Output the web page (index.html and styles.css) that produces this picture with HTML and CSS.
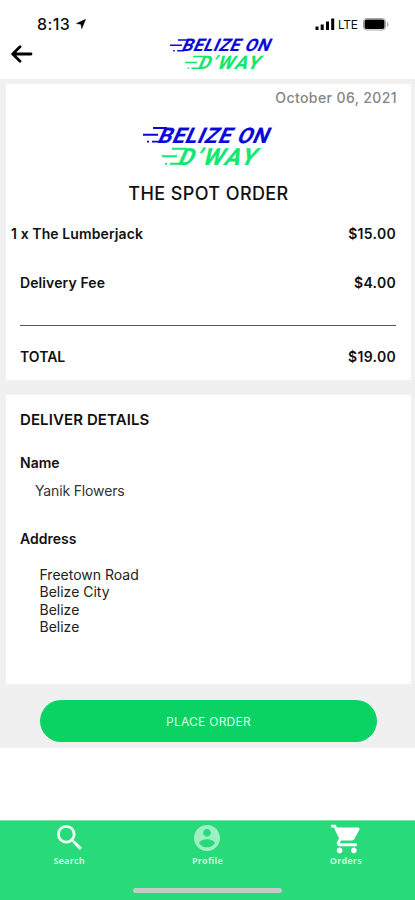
FILE: index.html
```html
<!DOCTYPE html>
<html lang="en">
<head>
<meta charset="utf-8">
<title>Belize on D'Way</title>
<link rel="stylesheet" href="styles.css">
</head>
<body>
<svg width="0" height="0" class="defs">
  <symbol id="logo" viewBox="0 0 132 42">
    <g fill="#0907dc" stroke="#0907dc">
      <path d="M10 2h14M0 8.800h15M4 15.600h2M9 15.600h9" stroke-width="1.900"/>
      <text transform="translate(13.500 16.500) skewX(-24)" font-size="21.500" stroke-width=".2" textLength="110" lengthAdjust="spacing">BELIZE ON</text>
    </g>
    <g fill="#10e96d" stroke="#10e96d">
      <path d="M29 22.800h14M19 30.300h15M22 37.800h2M27 37.800h11" stroke-width="1.900"/>
      <text transform="translate(33.500 39.200) skewX(-24)" font-size="23.500" stroke-width=".2" textLength="77" lengthAdjust="spacing">D’WAY</text>
    </g>
  </symbol>
</svg>
<div class="app">
  <header class="header">
    <div class="status">
      <span class="time">8:13</span>
      <svg class="loc" viewBox="0 0 11 11"><path d="M10.600.4L6.300 10.700 5.400 5.800.4 5z" stroke="#000" stroke-width=".5"/></svg>
      <svg class="signal" viewBox="0 0 20 13"><path d="M.5 8.500h3V12h-3zM5.700 6.500h3V12h-3zM11 3.500h3V12h-3zM16.200.5h3V12h-3z"/></svg>
      <span class="lte">LTE</span>
      <svg class="battery" viewBox="0 0 26 13"><rect x=".5" y=".5" width="22" height="11.500" rx="3" fill="#fff" stroke="#a5a5a5"/><rect x="1.500" y="1.500" width="20" height="9.500" rx="2"/><path d="M24 4v5q1.500-.6 1.500-2.500T24 4z" fill="#a5a5a5"/></svg>
    </div>
    <div class="topbar">
      <svg class="back" viewBox="0 0 22 18"><path d="M20 9H2M9 1.700L1.700 9 9 16.300" fill="none" stroke="#000" stroke-width="2.800" stroke-linecap="round" stroke-linejoin="round"/></svg>
      <svg class="logo-small"><use href="#logo"/></svg>
    </div>
  </header>
  <main class="main">
    <section class="card order">
      <div class="date">October 06, 2021</div>
      <svg class="logo-big"><use href="#logo"/></svg>
      <h1>THE SPOT ORDER</h1>
      <div class="row item"><span class="item-name">1 x The Lumberjack</span><span class="price">$15.00</span></div>
      <div class="row fee"><span class="fee-name">Delivery Fee</span><span class="price">$4.00</span></div>
      <div class="row total"><span>TOTAL</span><span class="price">$19.00</span></div>
    </section>
    <section class="card details">
      <h2>DELIVER DETAILS</h2>
      <h3>Name</h3>
      <p class="name">Yanik Flowers</p>
      <h3 class="address-title">Address</h3>
      <p class="address">Freetown Road<br>Belize City<br>Belize<br>Belize</p>
    </section>
    <button class="place">PLACE ORDER</button>
  </main>
  <nav class="nav">
    <div class="tabs">
      <a class="tab"><svg viewBox="3 3 17.500 17.500" class="i-search"><path d="M15.500 14h-.79l-.28-.27A6.471 6.471 0 0 0 16 9.500 6.500 6.500 0 1 0 9.500 16c1.610 0 3.090-.59 4.230-1.570l.27.28v.79l5 4.990L20.490 19l-4.990-5zm-6 0C7.010 14 5 11.990 5 9.500S7.010 5 9.500 5 14 7.010 14 9.500 11.990 14 9.500 14z"/></svg><span>Search</span></a>
      <a class="tab dim"><svg viewBox="2 2 20 20" class="i-profile"><path d="M12 2C6.480 2 2 6.480 2 12s4.480 10 10 10 10-4.480 10-10S17.520 2 12 2zm0 3c1.660 0 3 1.340 3 3s-1.340 3-3 3-3-1.340-3-3 1.340-3 3-3zm0 14.200c-2.500 0-4.710-1.280-6-3.220.03-1.990 4-3.080 6-3.080 1.990 0 5.970 1.090 6 3.080-1.290 1.940-3.500 3.220-6 3.220z"/></svg><span>Profile</span></a>
      <a class="tab"><svg viewBox="1 2 21 20" class="i-cart"><path d="M7 18c-1.100 0-1.990.9-1.990 2S5.900 22 7 22s2-.9 2-2-.9-2-2-2zM1 2v2h2l3.600 7.590-1.350 2.450c-.16.28-.25.61-.25.96 0 1.100.9 2 2 2h12v-2H7.420c-.14 0-.25-.11-.25-.25l.03-.12.9-1.630h7.450c.75 0 1.410-.41 1.750-1.030l3.580-6.490A1.003 1.003 0 0 0 20 4H5.210l-.94-2H1zm16 16c-1.100 0-1.990.9-1.990 2s.89 2 1.990 2 2-.9 2-2-.9-2-2-2z"/></svg><span>Orders</span></a>
    </div>
    <div class="home-bar"></div>
  </nav>
</div>
</body>
</html>
```
FILE: styles.css
```css
* { box-sizing: border-box; }
body { margin: 0; background: #fff; color: #111; font-family: Inter, "Liberation Sans", sans-serif; }
h1, h2, h3, p { margin: 0; }
svg { display: block; flex: none; }
.defs { display: none; }
.app { width: 415px; height: 900px; display: flex; flex-direction: column; overflow: hidden; }
.header { height: 79px; padding-top: 14px; }
.status { display: flex; align-items: center; height: 20px; padding-left: 37px; }
.time { width: 35px; font-size: 16px; font-weight: 500; letter-spacing: 0.4px; line-height: 20px; white-space: nowrap; }
.loc { width: 10px; height: 10px; margin-left: 4px; }
.signal { width: 20px; height: 13px; margin-left: 229px; }
.lte { width: 21px; margin: 1px 4px 0 3px; font-size: 12px; letter-spacing: -0.3px; }
.battery { width: 26px; height: 13px; }
.topbar { display: flex; align-items: flex-start; padding-left: 11px; }
.back { width: 22px; height: 18px; margin-top: 11px; }
.logo-small { width: 105px; height: 34px; margin: 4px 0 0 137px; }
#logo text { font-family: Roboto, sans-serif; font-weight: 700; }
.main { height: 669px; padding: 5px 4px 0 6px; background: #f0f0f0; display: flex; flex-direction: column; }
.card { background: #fff; }
.order { height: 296px; display: flex; flex-direction: column; }
.date { height: 28px; padding-right: 14px; line-height: 28px; text-align: right; font-size: 14px; font-weight: 500; letter-spacing: 0.4px; color: #858585; }
.logo-big { width: 132px; height: 42px; margin: 14px 0 0 137px; }
h1 { margin-top: 14px; line-height: 24px; text-align: center; font-size: 18px; font-weight: 500; letter-spacing: 0.4px; }
.row { display: flex; justify-content: space-between; line-height: 20px; font-size: 14px; font-weight: 600; }
.item { margin: 18px 15px 0 5px; }
.item-name { letter-spacing: 0.1px; }
.fee-name { letter-spacing: 0.1px; }
.price { letter-spacing: 0.3px; }
.fee { margin: 29px 15px 0 14px; }
.total { margin: 32px 15px 0 14px; padding-top: 21px; border-top: 1px solid #555; }
.details { height: 289px; margin-top: 15px; padding: 15px 14px 0; }
h2 { line-height: 20px; font-size: 15px; font-weight: 600; letter-spacing: 0.1px; }
h3 { margin-top: 23px; line-height: 20px; font-size: 14px; font-weight: 600; }
.name { margin: 8px 0 0 15px; line-height: 20px; font-size: 14px; letter-spacing: -0.15px; color: #333; }
.address-title { margin-top: 28px; }
.address { margin: 17px 0 0 19.5px; line-height: 17.4px; font-size: 14px; color: #222; }
.place { width: 337px; height: 42px; margin: 16px 0 0 34px; padding: 0; border: 0; border-radius: 21px; background: #0bd363; color: #dcffe9; font: 400 12px Inter, sans-serif; letter-spacing: 0.25px; }
.nav { height: 80px; margin-top: 72px; background: #28da7a; border-top: 1px solid #76e5a9; }
.tabs { display: grid; grid-template-columns: repeat(3, 1fr); height: 67px; }
.tab { display: flex; flex-direction: column; align-items: center; padding-top: 4px; color: #c9f7dc; font: 700 9px/11px "Open Sans", sans-serif; letter-spacing: 0.2px; }
.tab svg { fill: #effff5; }
.tab span { margin-top: auto; margin-bottom: 22px; }
.i-search { width: 25px; height: 25px; }
.i-profile { width: 26px; height: 26px; }
.dim .i-profile { fill: #9cf0c1; }
.tab .i-cart { width: 30px; height: 30px; margin-top: -1px; fill: #fff; }
.home-bar { width: 149px; height: 5px; margin: 0 auto; border-radius: 3px; background: #c6cbc8; }
```
